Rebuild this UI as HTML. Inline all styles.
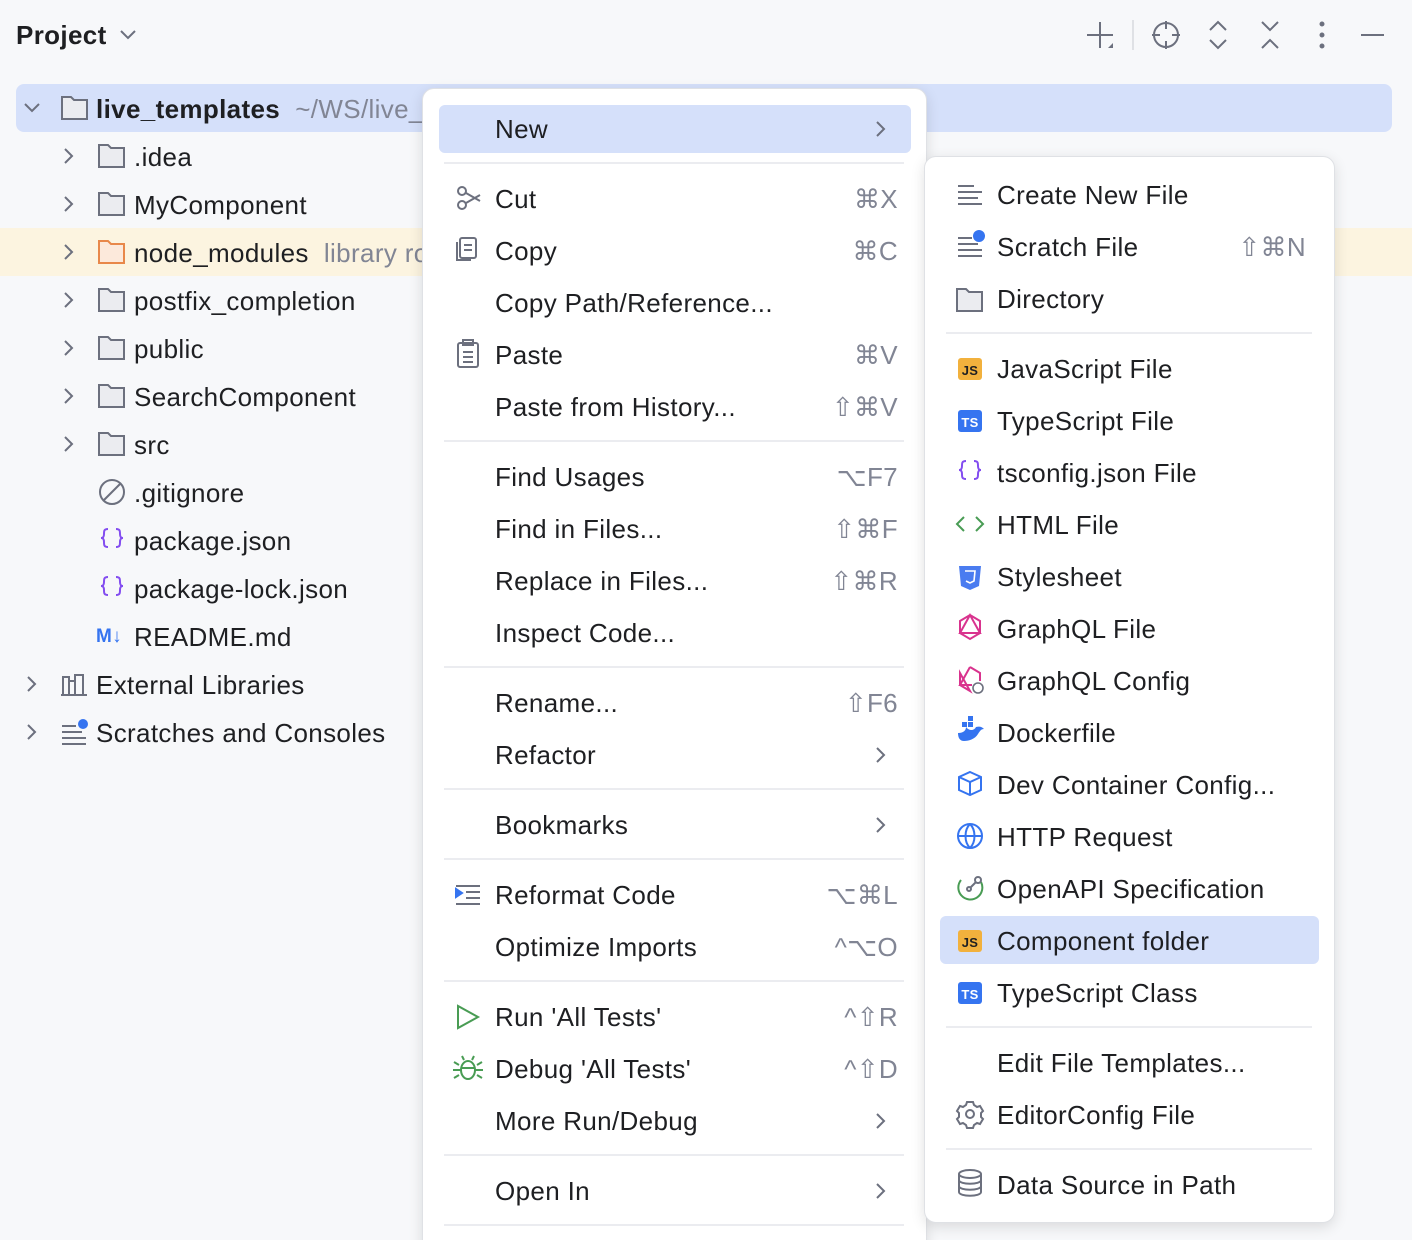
<!DOCTYPE html>
<html style="overflow:hidden"><head><meta charset="utf-8"><style>
*{margin:0;padding:0;box-sizing:border-box}
html,body{width:1412px;height:1240px;overflow:hidden}
body{background:#f7f8fa;font-family:"Liberation Sans",sans-serif;font-size:26px;letter-spacing:0.35px;color:#1e1f22;position:relative}
.a{position:absolute}
.t{position:absolute;line-height:48px;height:48px;white-space:nowrap;top:0}
.sc{position:absolute;color:#818594;line-height:48px;height:48px;white-space:nowrap}
.sep{position:absolute;height:2px;background:#ebecf0}
.menu{position:absolute;background:#fff;border:1px solid #dfe1e5;border-radius:12px;box-shadow:0 4px 14px rgba(0,0,0,.12)}
.layer{position:absolute;left:0;top:0;width:1412px;height:1240px}
</style></head><body>
<div class="t" style="left:16px;top:11px;font-weight:bold">Project</div>
<svg class="a" style="left:118px;top:26px" width="20" height="16"><path d="M3 5l7 7 7-7" stroke="#6c707e" stroke-width="2" fill="none"/></svg>
<svg class="a" style="left:1084px;top:18px" width="300" height="34" fill="none" stroke="#6c707e" stroke-width="2">
<path d="M16 4v26M3 17h26"/><path d="M24 30l5-5v5z" fill="#6c707e" stroke="none"/>
<path d="M49 2v30" stroke="#dfe1e5"/>
<circle cx="82" cy="17" r="12"/><path d="M82 3v8M82 23v8M68 17h8M88 17h8"/>
<path d="M126 12l8-8 8 8M126 22l8 8 8-8"/>
<path d="M178 4l8 8 8-8M178 30l8-8 8 8"/>
<circle cx="238" cy="6" r="1.5" fill="#6c707e"/><circle cx="238" cy="17" r="1.5" fill="#6c707e"/><circle cx="238" cy="28" r="1.5" fill="#6c707e"/>
<path d="M277 17h26"/>
</svg>
<div class="a" style="left:16px;top:84px;width:1376px;height:48px;background:#d5e0fa;border-radius:8px"></div>
<div class="a" style="left:0;top:228px;width:1412px;height:48px;background:#fcf4e0"></div>
<svg class="a" style="left:0;top:84px" width="140" height="672" fill="none" stroke="#6c707e" stroke-width="2">
<path d="M25 20l7 7 7-7"/>
<path d="M65 65l7 7-7 7M65 113l7 7-7 7M65 161l7 7-7 7M65 209l7 7-7 7M65 257l7 7-7 7M65 305l7 7-7 7M65 353l7 7-7 7"/>
<path d="M28 593l7 7-7 7M28 641l7 7-7 7"/>
</svg>
<svg class="a" style="left:0;top:84px" width="140" height="672" fill="none" stroke-width="2">
<g stroke="#6c707e" fill="#ebecf0">
<path d="M62 13h9l3 3h13v19H62z"/>
<path d="M99 61h9l3 3h13v19H99z"/>
<path d="M99 109h9l3 3h13v19H99z"/>
<path d="M99 205h9l3 3h13v19H99z"/>
<path d="M99 253h9l3 3h13v19H99z"/>
<path d="M99 301h9l3 3h13v19H99z"/>
<path d="M99 349h9l3 3h13v19H99z"/>
</g>
<path d="M99 157h9l3 3h13v19H99z" stroke="#e8884a" fill="#fce9db"/>
<circle cx="112" cy="408" r="12" stroke="#6c707e"/><path d="M104 416l16-16" stroke="#6c707e"/>
<path d="M108 445c-4 0-4 2-4 5s-1 4-3 4c2 0 3 1 3 4s0 5 4 5M116 445c4 0 4 2 4 5s1 4 3 4c-2 0-3 1-3 4s0 5-4 5" stroke="#834df0"/>
<path d="M108 493c-4 0-4 2-4 5s-1 4-3 4c2 0 3 1 3 4s0 5 4 5M116 493c4 0 4 2 4 5s1 4 3 4c-2 0-3 1-3 4s0 5-4 5" stroke="#834df0"/>
<path d="M63 611v-18h6v18M69 611v-14h6v14M75 611v-20h8v20M61 611h26" stroke="#6c707e"/>
<path d="M62 642h14M62 648h20M62 654h24M62 660h24" stroke="#6c707e"/><circle cx="83" cy="640" r="5" fill="#3574f0" stroke="none"/>
</svg>
<div class="t" style="left:96px;top:85px;font-weight:bold">live_templates <span style="font-weight:normal;color:#818594">&nbsp;~/WS/live_templates</span></div>
<div class="t" style="left:134px;top:133px">.idea</div>
<div class="t" style="left:134px;top:181px">MyComponent</div>
<div class="t" style="left:134px;top:229px">node_modules <span style="color:#818594">&nbsp;library root</span></div>
<div class="t" style="left:134px;top:277px">postfix_completion</div>
<div class="t" style="left:134px;top:325px">public</div>
<div class="t" style="left:134px;top:373px">SearchComponent</div>
<div class="t" style="left:134px;top:421px">src</div>
<div class="t" style="left:134px;top:469px">.gitignore</div>
<div class="t" style="left:134px;top:517px">package.json</div>
<div class="t" style="left:134px;top:565px">package-lock.json</div>
<div class="t" style="left:96px;top:613px;color:#3574f0;font-weight:bold;font-size:19px">M↓</div>
<div class="t" style="left:134px;top:613px">README.md</div>
<div class="t" style="left:96px;top:661px">External Libraries</div>
<div class="t" style="left:96px;top:709px">Scratches and Consoles</div>

<div class="menu" style="left:422px;top:88px;width:505px;height:1170px">
<div class="a" style="left:16px;top:16px;width:472px;height:48px;background:#d5e0fa;border-radius:6px"></div>
</div>
<div class="layer">
<div class="t" style="left:495px;top:105px">New</div>
<div class="sep" style="left:444px;top:162px;width:460px"></div>
<div class="t" style="left:495px;top:175px">Cut</div><div class="sc" style="right:514px;top:175px">⌘X</div>
<div class="t" style="left:495px;top:227px">Copy</div><div class="sc" style="right:514px;top:227px">⌘C</div>
<div class="t" style="left:495px;top:279px">Copy Path/Reference...</div>
<div class="t" style="left:495px;top:331px">Paste</div><div class="sc" style="right:514px;top:331px">⌘V</div>
<div class="t" style="left:495px;top:383px">Paste from History...</div><div class="sc" style="right:514px;top:383px">⇧⌘V</div>
<div class="sep" style="left:444px;top:440px;width:460px"></div>
<div class="t" style="left:495px;top:453px">Find Usages</div><div class="sc" style="right:514px;top:453px">⌥F7</div>
<div class="t" style="left:495px;top:505px">Find in Files...</div><div class="sc" style="right:514px;top:505px">⇧⌘F</div>
<div class="t" style="left:495px;top:557px">Replace in Files...</div><div class="sc" style="right:514px;top:557px">⇧⌘R</div>
<div class="t" style="left:495px;top:609px">Inspect Code...</div>
<div class="sep" style="left:444px;top:666px;width:460px"></div>
<div class="t" style="left:495px;top:679px">Rename...</div><div class="sc" style="right:514px;top:679px">⇧F6</div>
<div class="t" style="left:495px;top:731px">Refactor</div>
<div class="sep" style="left:444px;top:788px;width:460px"></div>
<div class="t" style="left:495px;top:801px">Bookmarks</div>
<div class="sep" style="left:444px;top:858px;width:460px"></div>
<div class="t" style="left:495px;top:871px">Reformat Code</div><div class="sc" style="right:514px;top:871px">⌥⌘L</div>
<div class="t" style="left:495px;top:923px">Optimize Imports</div><div class="sc" style="right:514px;top:923px">^⌥O</div>
<div class="sep" style="left:444px;top:980px;width:460px"></div>
<div class="t" style="left:495px;top:993px">Run 'All Tests'</div><div class="sc" style="right:514px;top:993px">^⇧R</div>
<div class="t" style="left:495px;top:1045px">Debug 'All Tests'</div><div class="sc" style="right:514px;top:1045px">^⇧D</div>
<div class="t" style="left:495px;top:1097px">More Run/Debug</div>
<div class="sep" style="left:444px;top:1154px;width:460px"></div>
<div class="t" style="left:495px;top:1167px">Open In</div>
<div class="sep" style="left:444px;top:1224px;width:460px"></div>
</div>
<svg class="a" style="left:440px;top:100px" width="470" height="1140" fill="none" stroke="#6c707e" stroke-width="2">
<path d="M437 22l7 7-7 7M437 648l7 7-7 7M437 718l7 7-7 7M437 1014l7 7-7 7M437 1084l7 7-7 7"/>
<circle cx="22" cy="91" r="4"/><circle cx="22" cy="105" r="4"/><path d="M26 93l14 8M26 103l14-8"/>
<rect x="20" y="138" width="16" height="20" rx="2"/><path d="M17 142v18h14M24 145h8M24 150h8"/>
<rect x="18" y="243" width="20" height="24" rx="2"/><path d="M23 240h10v5H23zM23 252h10M23 257h10M23 262h10"/>
<path d="M16 786h24M26 792h14M26 798h14M16 804h24" /><path d="M16 789l6 4-6 4z" fill="#3574f0" stroke="#3574f0"/>
<path d="M18 906v22l20-11z" stroke="#499c54"/>
<g stroke="#499c54"><ellipse cx="28" cy="970" rx="7" ry="9"/><path d="M21 968h14M14 962l5 3M42 962l-5 3M13 970h8M35 970h8M14 978l5-3M42 978l-5-3M24 960l-2-4M32 960l2-4"/></g>
</svg>

<div class="menu" style="left:924px;top:156px;width:411px;height:1067px">
<div class="a" style="left:15px;top:759px;width:379px;height:48px;background:#d5e0fa;border-radius:6px"></div>
</div>
<div class="layer">
<div class="t" style="left:997px;top:171px">Create New File</div>
<div class="t" style="left:997px;top:223px">Scratch File</div><div class="sc" style="right:106px;top:223px">⇧⌘N</div>
<div class="t" style="left:997px;top:275px">Directory</div>
<div class="sep" style="left:946px;top:332px;width:366px"></div>
<div class="t" style="left:997px;top:345px">JavaScript File</div>
<div class="t" style="left:997px;top:397px">TypeScript File</div>
<div class="t" style="left:997px;top:449px">tsconfig.json File</div>
<div class="t" style="left:997px;top:501px">HTML File</div>
<div class="t" style="left:997px;top:553px">Stylesheet</div>
<div class="t" style="left:997px;top:605px">GraphQL File</div>
<div class="t" style="left:997px;top:657px">GraphQL Config</div>
<div class="t" style="left:997px;top:709px">Dockerfile</div>
<div class="t" style="left:997px;top:761px">Dev Container Config...</div>
<div class="t" style="left:997px;top:813px">HTTP Request</div>
<div class="t" style="left:997px;top:865px">OpenAPI Specification</div>
<div class="t" style="left:997px;top:917px">Component folder</div>
<div class="t" style="left:997px;top:969px">TypeScript Class</div>
<div class="sep" style="left:946px;top:1026px;width:366px"></div>
<div class="t" style="left:997px;top:1039px">Edit File Templates...</div>
<div class="t" style="left:997px;top:1091px">EditorConfig File</div>
<div class="sep" style="left:946px;top:1148px;width:366px"></div>
<div class="t" style="left:997px;top:1161px">Data Source in Path</div>
</div>
<svg class="a" style="left:950px;top:170px" width="40" height="1040" fill="none" stroke="#6c707e" stroke-width="2">
<path d="M8 16h16M8 22h24M8 28h20M8 34h24"/>
<path d="M8 68h14M8 74h20M8 80h24M8 86h24"/><circle cx="29" cy="66" r="6" fill="#3574f0" stroke="none"/>
<path d="M7 119h9l3 3h13v19H7z" fill="#ebecf0"/>
<rect x="8" y="188" width="24" height="22" rx="3" fill="#f2b13d" stroke="none"/>
<text x="20" y="205" font-family="Liberation Sans" font-weight="bold" font-size="13" fill="#1e1f22" stroke="none" text-anchor="middle">JS</text>
<rect x="8" y="240" width="24" height="22" rx="3" fill="#3574f0" stroke="none"/>
<text x="20" y="257" font-family="Liberation Sans" font-weight="bold" font-size="13" fill="#fff" stroke="none" text-anchor="middle">TS</text>
<path d="M16 291c-4 0-4 2-4 5s-1 4-3 4c2 0 3 1 3 4s0 5 4 5M24 291c4 0 4 2 4 5s1 4 3 4c-2 0-3 1-3 4s0 5-4 5" stroke="#834df0"/>
<path d="M14 347l-7 7 7 7M26 347l7 7-7 7" stroke="#499c54"/>
<path d="M9 396h22l-2 20-9 4-9-4z" fill="#4a7cf0" stroke="none"/><path d="M15 401h10l-1 10-4 2-4-2" stroke="#fff" stroke-width="1.6"/>
<g stroke="#d9338e"><path d="M20 445l10 6v12l-10 6-10-6v-12zM20 445l-10 18h20z"/></g>
<g stroke="#d9338e"><path d="M20 497l10 6v8M20 521l-10-6v-12zM20 497l-10 18h12"/></g><circle cx="28" cy="518" r="5" stroke="#6c707e" stroke-width="1.6"/>
<path d="M8 563c6 0 8-3 8-6 3 4 8 4 10 0 4-1 6 0 8 2-3 0-4 2-6 5-3 5-9 7-14 7-4 0-6-3-6-8z" fill="#3574f0" stroke="none"/>
<path d="M12 552h5v5h-5zM18 552h5v5h-5zM18 546h5v5h-5z" fill="#3574f0" stroke="none"/>
<path d="M20 602l11 5v13l-11 5-11-5v-13zM9 607l11 5 11-5M20 612v13" stroke="#3574f0"/>
<circle cx="20" cy="666" r="12" stroke="#3574f0"/><path d="M8 666h24M20 654c-6 6-6 18 0 24M20 654c6 6 6 18 0 24" stroke="#3574f0"/>
<path d="M31 712a12 12 0 1 1-20 -2" stroke="#499c54"/><circle cx="28" cy="710" r="3"/><path d="M26 712l-6 6"/><circle cx="19" cy="719" r="2"/>
<rect x="8" y="760" width="24" height="22" rx="3" fill="#f2b13d" stroke="none"/>
<text x="20" y="777" font-family="Liberation Sans" font-weight="bold" font-size="13" fill="#1e1f22" stroke="none" text-anchor="middle">JS</text>
<rect x="8" y="812" width="24" height="22" rx="3" fill="#3574f0" stroke="none"/>
<text x="20" y="829" font-family="Liberation Sans" font-weight="bold" font-size="13" fill="#fff" stroke="none" text-anchor="middle">TS</text>
<circle cx="20" cy="944" r="4"/><path d="M17 932h6l1 3 3 2 3-1 3 5-2 2v4l2 2-3 5-3-1-3 2-1 3h-6l-1-3-3-2-3 1-3-5 2-2v-4l-2-2 3-5 3 1 3-2z"/>
<ellipse cx="20" cy="1004" rx="11" ry="4"/><path d="M9 1004v18c0 5 22 5 22 0v-18M9 1010c0 5 22 5 22 0M9 1016c0 5 22 5 22 0"/>
</svg>
</body></html>
